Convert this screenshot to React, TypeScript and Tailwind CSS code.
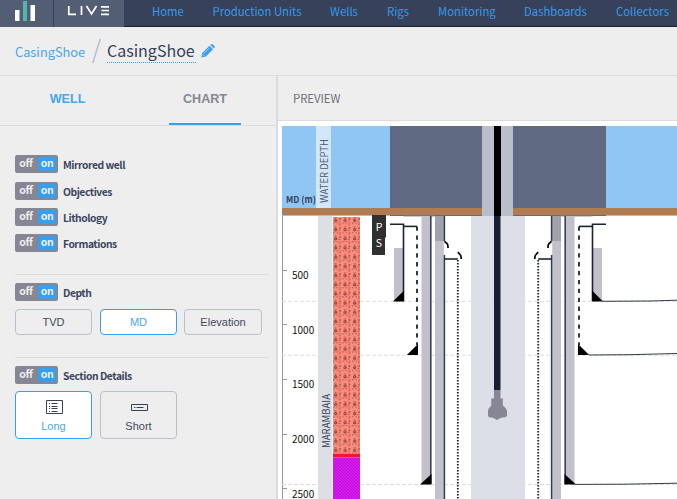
import React from "react";

const nav = [
  ["Home", "ml-[28px] w-[60.5px]"],
  ["Production Units", "w-[117.5px]"],
  ["Wells", "w-[57px]"],
  ["Rigs", "w-[51px]"],
  ["Monitoring", "w-[86px]"],
  ["Dashboards", "w-[92px]"],
  ["Collectors", "w-[60px]"],
];

function Toggle({ label, className = "" }: { label: string; className?: string }) {
  return (
    <div className={`flex h-[18px] items-center ${className}`}>
      <div className="flex h-[18px] w-[43px] shrink-0 items-center rounded-[2px] bg-[#868695] text-[10.5px] leading-[14px] font-bold tracking-[-0.3px] text-[#eee]">
        <span className="-mt-[2px] w-[22px] text-center">off</span>
        <span className="ml-px flex h-[14px] w-[18px] items-center justify-center rounded-[2px] bg-[#36a0ef] pb-[2px]">on</span>
      </div>
      <span className="mt-[2px] ml-[5px] text-[10.3px] leading-[16px] font-bold tracking-[-0.45px] whitespace-nowrap text-[#3a4560]">{label}</span>
    </div>
  );
}

function Choice({ label, active = false, className = "", children }: { label: string; active?: boolean; className?: string; children?: React.ReactNode }) {
  return (
    <button
      className={`flex flex-col items-center justify-center rounded-[4px] border font-['Liberation_Sans',sans-serif] text-[11px] leading-[14px] ${active ? "border-[#36a0ef] bg-white text-[#4aa6ec]" : "border-[#b9bfcb] text-[#414a5e]"} ${className}`}
    >
      {children}
      {label}
    </button>
  );
}

function CasingSide() {
  return (
    <g>
      <rect x="394" y="248" width="9" height="53" fill="#c2c1cb" />
      <path d="M390 224.3H403.5V301" fill="none" stroke="#1a2336" strokeWidth="1.6" />
      <path d="M393 301.5L404 290.5V301.5Z" />
      <path d="M403.5 226.4H417" stroke="#1a2336" strokeWidth="1.6" />
      <path d="M417 226.5V345" stroke="#1a2336" strokeWidth="1.8" strokeDasharray="4.3 4.6" />
      <path d="M406.8 355L418 344V355Z" />
      <path d="M403.5 216.3H435" stroke="#aaa9b2" strokeWidth="0.8" />
      <rect x="421.5" y="216" width="8.5" height="268" fill="#c2c1cb" />
      <rect x="430" y="216" width="1.6" height="268" fill="#35415b" />
      <path d="M420 484.5L431.5 474V484.5Z" />
      <rect x="435" y="216" width="8.8" height="290" fill="#c2c1cb" />
      <rect x="435" y="216" width="8.8" height="25" fill="#a2a1ae" />
      <path d="M444.4 216V241M444.4 255V500" stroke="#303b54" strokeWidth="1.5" />
      <path d="M444.5 241.3L447 243.5Q448.2 245 448 248M457.8 252.2L460 254.5Q461.4 255.8 461.2 259" fill="none" stroke="#000" strokeWidth="1.7" />
      <path d="M444.4 259H457.8" stroke="#1a2336" strokeWidth="1.6" />
      <path d="M457.8 260V500" stroke="#1a2336" strokeWidth="1.8" strokeDasharray="1.5 1.5" />
    </g>
  );
}

function WellChart() {
  return (
    <svg className="block h-[378px] w-[399px]" viewBox="278 121 399 378">
      <defs>
        <pattern id="rock" x="333" y="217" width="9.5" height="9.2" patternUnits="userSpaceOnUse">
          <rect width="9.5" height="9.2" fill="#fd8d7d" />
          <circle cx="2.6" cy="3.4" r="1.1" fill="none" stroke="#4a1f1c" strokeWidth="0.9" />
          <path d="M1.6 .8h2M6 1.8h2M7 1v2M5.5 4.2h1.5M0 6.3h1.5M3.5 6.3h1.5M6.5 6.3h1.5M6 8h1.5" stroke="#9c453d" strokeWidth="0.9" />
        </pattern>
        <pattern id="hatch" width="3" height="3" x="333" y="457" patternUnits="userSpaceOnUse">
          <rect width="3" height="3" fill="#df16f5" />
          <path d="M0 0L3 3" stroke="#a815c4" strokeWidth="0.9" />
        </pattern>
      </defs>
      <rect x="278" y="121" width="399" height="378" fill="#fff" />
      <rect x="282" y="126" width="395" height="90" fill="#90c6f4" />
      <rect x="316" y="126" width="15" height="82" fill="#d3e7fa" />
      <rect x="390" y="126" width="216" height="90" fill="#606a82" />
      <rect x="282" y="208" width="395" height="7" fill="#b17b51" />
      <path d="M282.5 216V499M282 270.5h5M282 324.5h5M282 379.5h5M282 434.5h5M282 488.5h5" stroke="#999" fill="none" />
      <rect x="318" y="216" width="14" height="283" fill="#dcdfe4" />
      <rect x="471" y="216" width="54" height="283" fill="#dcdfe7" />
      <path d="M282 301.3H677M282 355.2H677M282 484.5H677" stroke="#ddd" strokeDasharray="4 2" />
      <rect x="333" y="217" width="27" height="237" fill="url(#rock)" />
      <rect x="333" y="454" width="27" height="3.5" fill="#ff1036" />
      <rect x="333" y="457.5" width="27" height="42" fill="url(#hatch)" />
      <CasingSide />
      <g transform="matrix(-1 0 0 1 996 0)"><CasingSide /></g>
      <path d="M602 301.3L650 301L677 300.2M589 355L630 354.7L677 353.5M575 484.4L625 484.2L677 483.2" stroke="#1a2336" strokeWidth="0.9" fill="none" />
      <rect x="482" y="126" width="31" height="90" fill="#b8bfcb" />
      <rect x="494" y="126" width="7" height="90" />
      <rect x="494" y="216" width="6.5" height="174" fill="#172033" />
      <path d="M494 390h6.5v8.5h2.3v7q4.2 3 4.2 6v4.5q-2 2-5 1.5l-3 1.3-2 1.2-2-1.2-3-1.3q-3 .5-4-1.5v-4.5q0-3 3.3-6v-7h2.7z" fill="#878694" />
      <path d="M372 215h14v22.5h-1V255h-13z" fill="#303031" />
      <text x="375.8" y="231" fontSize="10.5" fill="#fff">P</text>
      <text x="375.8" y="247" fontSize="10.5" fill="#fff">S</text>
      <text x="286" y="203" fontSize="9.3" fontWeight="700" fill="#34415b" textLength="30" lengthAdjust="spacingAndGlyphs">MD (m)</text>
      <g fontSize="10" fill="#111">
        <text x="292" y="279">500</text>
        <text x="292" y="334">1000</text>
        <text x="292" y="388">1500</text>
        <text x="292" y="443">2000</text>
        <text x="292" y="497.7">2500</text>
      </g>
      <text transform="translate(328 203) rotate(-90)" fontSize="10" fill="#505b70" textLength="64" lengthAdjust="spacingAndGlyphs">WATER DEPTH</text>
      <text transform="translate(330 448) rotate(-90)" fontSize="10" fill="#34415b" textLength="54" lengthAdjust="spacingAndGlyphs">MARAMBAIA</text>
    </svg>
  );
}

export default function App() {
  return (
    <div className="flex h-[499px] w-[677px] flex-col overflow-hidden bg-[#eee] font-['Noto_Sans_CJK_SC',sans-serif]">
      <header className="flex h-[27px] shrink-0 border-b border-[#1a2336] bg-[#37415a]">
        <div className="flex h-[27px] w-[54px] shrink-0 border-r border-[#37415a] bg-[#535e75]">
          <svg className="h-[27px] w-[53px]" viewBox="0 0 53 27">
            <path d="M15 10h4.5v11H15zM30.5 5h4.5v16h-4.5z" fill="#fff" />
            <path d="M23 1h4v20h-4z" fill="#54b5ac" />
          </svg>
        </div>
        <div className="h-[27px] w-[70px] shrink-0 bg-[#535e75]">
          <svg className="h-[27px] w-[70px]" viewBox="54 0 70 27" fill="none" stroke="#fff" strokeWidth="1.7">
            <path d="M68.8 6V14.3H76M81.5 6V15M86.5 6L91.5 14L96.5 6M101 6.8H109M101.5 10.5H109M101 14.3H109" />
          </svg>
        </div>
        <nav className="flex min-w-0">
          {nav.map(([label, cls]) => (
            <a key={label} className={`h-[22px] shrink-0 text-[11.3px] leading-[22px] whitespace-nowrap text-[#369bea] ${cls}`}>{label}</a>
          ))}
        </nav>
      </header>
      <div className="flex h-[49px] shrink-0 items-center border-b border-[#dcdce0] pl-[15px]">
        <a className="w-[70px] pt-[2px] text-[12.8px] leading-[20px] text-[#43a6ee]">CasingShoe</a>
        <svg className="ml-[7px] mr-[6px] h-[26px] w-[9px]" viewBox="0 0 9 26"><path d="M.7 25L8.3 1" stroke="#b9bfcb" strokeWidth="1.6" /></svg>
        <h1 className="h-[23px] w-[89px] border-b border-dotted border-[#36a0ef] text-[16px] leading-[21px] whitespace-nowrap text-[#37415a]">CasingShoe</h1>
        <svg className="ml-[5px] h-[14px] w-[14px]" viewBox="0 0 14 14" fill="#36a0ef">
          <path d="M1.2 9L8.5 1.8l3.5 3.5L4.8 12.6.3 13.5zM9.3 1l1-.8q.7-.4 1.4.2l1.8 1.8q.6.7.1 1.4l-.8.9z" />
          <path d="M3 9.3L8.3 4M1.8 10.5l1.6 1.6" stroke="#eee" strokeWidth=".6" />
        </svg>
      </div>
      <main className="flex h-[423px] shrink-0">
        <aside className="w-[278px] shrink-0 border-r-2 border-[#dcdce0]">
          <div className="flex h-[50px] border-b border-[#dcdce0] pl-[31px] font-['Liberation_Sans',sans-serif] text-[12.6px] leading-[46px] font-bold">
            <div className="w-[73px] text-center text-[#43a6ee]">WELL</div>
            <div className="ml-[65px] h-[49px] w-[72px] border-b-2 border-[#36a0ef] text-center text-[#868695]">CHART</div>
          </div>
          <div className="ml-[15px] flex w-[254px] flex-col pt-[29px]">
            <Toggle label="Mirrored well" />
            <Toggle label="Objectives" className="mt-[9px]" />
            <Toggle label="Lithology" className="mt-[8px]" />
            <Toggle label="Formations" className="mt-[8px]" />
            <div className="mt-[22px] h-px bg-[#dcdce0]" />
            <Toggle label="Depth" className="mt-[8px]" />
            <div className="mt-[8px] flex">
              <Choice label="TVD" className="h-[26px] w-[77px]" />
              <Choice label="MD" active className="ml-[8px] h-[26px] w-[77px]" />
              <Choice label="Elevation" className="ml-[7px] h-[26px] w-[78px]" />
            </div>
            <div className="mt-[22px] h-px bg-[#dcdce0]" />
            <Toggle label="Section Details" className="mt-[8px]" />
            <div className="mt-[7px] flex gap-2">
              <Choice label="Long" active className="h-[48px] w-[77px]">
                <svg className="mt-[2px] mb-[5px] ml-[2px] h-[14px] w-[17px]" viewBox="0 0 17 14" fill="none" stroke="#37415a">
                  <path d="M.5.5h16v13H.5zM3 3.5h1M3 6.5h1M3 8.5h1M3 11.5h1M5.5 3.5h6M5.5 6.5h6M5.5 8.5h6M5.5 11.5h6" />
                </svg>
              </Choice>
              <Choice label="Short" className="h-[48px] w-[77px]">
                <svg className="mt-[2px] mb-[5px] ml-[2px] h-[14px] w-[17px]" viewBox="0 0 17 14" fill="none" stroke="#37415a">
                  <path d="M.5 4.5h16v6H.5zM3 7.5h1.5M5.5 7.5h7" />
                </svg>
              </Choice>
            </div>
          </div>
        </aside>
        <section className="w-[399px] shrink-0">
          <h2 className="h-[45px] border-b border-[#dcdce0] pl-[15px] text-[11.3px] leading-[45px] text-[#6f7078]">PREVIEW</h2>
          <WellChart />
        </section>
      </main>
    </div>
  );
}
